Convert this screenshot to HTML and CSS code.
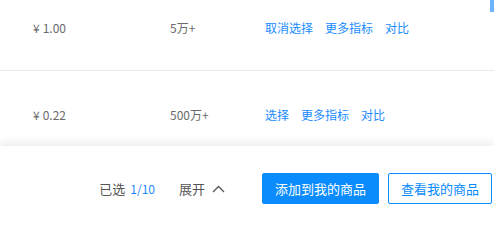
FILE: index.html
```html
<!DOCTYPE html>
<html lang="zh-CN">
<head>
<meta charset="utf-8">
<link rel="stylesheet" href="styles.css">
</head>
<body>
<div class="list">
  <div class="row">
    <div class="price"><span class="yen">¥</span>1.00</div>
    <div class="sales">5万+</div>
    <div class="ops"><a class="link">取消选择</a><a class="link">更多指标</a><a class="link">对比</a></div>
  </div>
  <div class="row">
    <div class="price"><span class="yen">¥</span>0.22</div>
    <div class="sales">500万+</div>
    <div class="ops"><a class="link">选择</a><a class="link">更多指标</a><a class="link">对比</a></div>
  </div>
</div>
<div class="thumb"></div>
<div class="footer">
  <div class="selected">已选<span class="count">1/10</span></div>
  <div class="expand">展开<svg class="chev" width="13" height="8" viewBox="0 0 13 8"><path d="M1 7L6.5 1.5L12 7" fill="none" stroke="#555" stroke-width="1.3"/></svg></div>
  <button class="btn primary">添加到我的商品</button>
  <button class="btn outline">查看我的商品</button>
</div>
</body>
</html>
```
FILE: styles.css
```css
html, body { margin: 0; padding: 0; background: #fff; overflow: hidden; }
body { width: 494px; height: 209px; position: relative; font-family: "Noto Sans CJK SC", "Noto Sans", sans-serif; font-size: 12px; color: #666; }
.list { margin-top: -16px; }
.row { display: grid; grid-template-columns: 137px 95px 1fr; align-items: center; height: 86px; padding-left: 33px; border-bottom: 1px solid #e8e8e8; }
.price, .sales { color: #6a6a6a; }
.yen { margin-right: 3px; }
.ops { display: flex; gap: 12px; }
.link { color: #1a8cff; cursor: pointer; }
.thumb { position: absolute; right: 0; top: 0; width: 4px; height: 12px; background: #6cb5fd; }
.footer { position: absolute; left: 0; right: 0; top: 146px; height: 63px; background: #fff; box-shadow: 0 -3px 8px rgba(40, 60, 90, 0.10); display: flex; align-items: center; justify-content: flex-end; padding: 22px 2px 0 0; box-sizing: border-box; font-size: 13px; color: #555; }
.selected { margin-right: 24px; }
.count { color: #1a8cff; font-size: 12px; margin-left: 5px; }
.expand { display: flex; align-items: center; gap: 7px; margin-right: 37px; }
.chev { display: block; }
.btn { font-family: inherit; font-size: 13px; height: 31px; padding: 0 12px; border-radius: 2px; border: 1px solid #0a8cff; box-sizing: border-box; cursor: pointer; }
.primary { background: #0a8cff; color: #fff; margin-right: 9px; }
.outline { background: #fff; color: #0a8cff; }
```
